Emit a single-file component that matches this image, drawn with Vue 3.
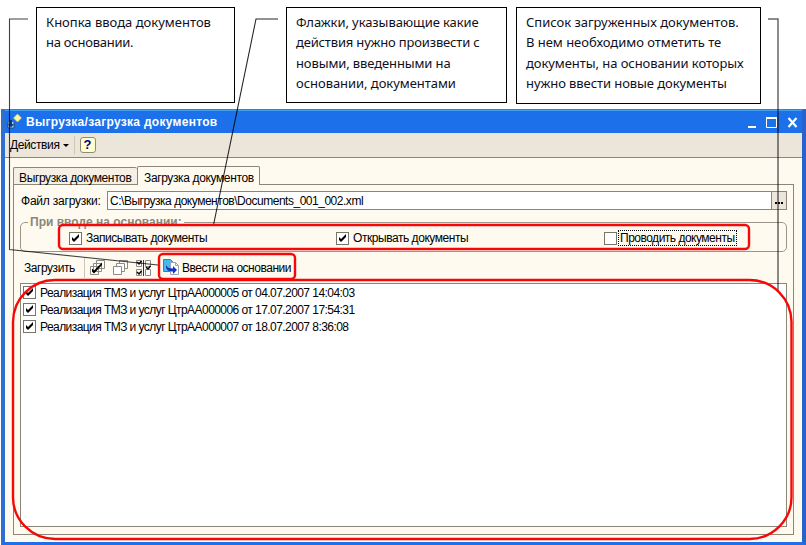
<script setup>
import { ref } from 'vue'

const notes = [
  { cls: 'n1', lines: [['Кнопка ввода документов', 0], ['на основании.', -0.25]] },
  {
    cls: 'n2',
    lines: [
      ['Флажки, указывающие какие', -0.08],
      ['действия нужно произвести с', -0.17],
      ['новыми, введенными на', -0.12],
      ['основании, документами', -0.05],
    ],
  },
  {
    cls: 'n3',
    lines: [
      ['Список загруженных документов.', -0.02],
      ['В нем необходимо отметить те', -0.03],
      ['документы, на основании которых', -0.07],
      ['нужно ввести новые документы', -0.08],
    ],
  },
]

const flags = ref([
  { label: 'Записывать документы', cls: 'f1', on: true },
  { label: 'Открывать документы', cls: 'f2', on: true },
  { label: 'Проводить документы', cls: 'f3', on: false },
])

const docs = ref([
  { label: 'Реализация ТМЗ и услуг ЦтрАА000005 от 04.07.2007 14:04:03', on: true },
  { label: 'Реализация ТМЗ и услуг ЦтрАА000006 от 17.07.2007 17:54:31', on: true },
  { label: 'Реализация ТМЗ и услуг ЦтрАА000007 от 18.07.2007 8:36:08', on: true },
])
</script>

<template>
  <div class="page">
    <div class="notes">
      <div v-for="n in notes" :key="n.cls" class="note" :class="n.cls">
        <div v-for="l in n.lines" :key="l[0]" :style="{ letterSpacing: l[1] + 'px' }">{{ l[0] }}</div>
      </div>
    </div>

    <div class="window">
      <div class="titlebar">
        <svg class="app-icon" width="16" height="18" viewBox="0 0 16 18">
          <path d="M1 9v6h6V9" fill="#b9d4e8" stroke="#1b4f7c" />
          <path d="M3 7h2v4h2l-3 3.500L1 11h2z" fill="#12347c" />
          <path d="M10.500 1l4 4-4 4-4-4z" fill="#fffaa0" stroke="#d6c75a" stroke-width=".6" />
        </svg>
        <span class="title">Выгрузка/загрузка документов</span>
        <svg class="controls" width="52" height="14" viewBox="0 0 52 14">
          <path d="M1 12h8" stroke="#fff" stroke-width="2" />
          <path d="M19.500 3.500h10v9h-10z" fill="none" stroke="#fff" />
          <path d="M19 3h11" stroke="#fff" stroke-width="2" />
          <path d="M41.500 3l8 9M49.500 3l-8 9" stroke="#fff" stroke-width="2.200" />
        </svg>
      </div>

      <div class="menubar">
        <span class="actions">Действия</span>
        <span class="caret"></span>
        <span class="vsep"></span>
        <span class="help">?</span>
      </div>

      <div class="body">
        <div class="tabs">
          <div class="tab t1">Выгрузка документов</div>
          <div class="tab t2 active">Загрузка документов</div>
        </div>
        <div class="panel">
          <div class="file">
            <span class="file-label">Файл загрузки:</span>
            <div class="input">C:\Выгрузка документов\Documents_001_002.xml</div>
            <div class="dots"><i></i><i></i><i></i></div>
          </div>

          <div class="group">
            <div class="legend">При вводе на основании:</div>
            <div v-for="f in flags" :key="f.cls" class="flag" :class="f.cls">
              <span class="check" @click="f.on = !f.on">
                <svg v-if="f.on" width="11" height="11" viewBox="0 0 11 11"><path d="M2 4v3l2 2 5-5V1L4 6z" fill="#000" /></svg>
              </span>
              <span class="flag-label">{{ f.label }}</span>
            </div>
          </div>

          <div class="tools">
            <span class="load">Загрузить</span>
            <span class="tsep"></span>
            <svg class="ico" width="16" height="16" viewBox="0 0 16 16">
              <g fill="#fff" stroke="#8d8b82">
                <path d="M6.500 .5h8v8h-8zM3.500 3.500h8v8h-8zM.5 6.500h8v8h-8z" />
              </g>
              <path d="M2 8.500v3l2 2 8-8.500V2.500L4 10.500z" fill="#000" />
            </svg>
            <svg class="ico" width="16" height="16" viewBox="0 0 16 16">
              <g fill="#fff" stroke="#8d8b82">
                <path d="M6.500 .5h8v8h-8z" />
                <path d="M3.500 3.500h8v8h-8z" />
                <path d="M.5 6.500h8v8h-8z" />
              </g>
            </svg>
            <svg class="ico" width="16" height="16" viewBox="0 0 16 16">
              <g fill="#fff" stroke="#8d8b82">
                <path d="M.5 .5h5v6h-5zM.5 9.500h5v6h-5zM9.500 .5h5v6h-5zM9.500 9.500h5v6h-5z" />
                <path d="M7.500 0v16" stroke="#333" />
              </g>
              <path d="M1 2l2 2 2.500-3M1 12l2 2 2.500-3M10 7l2 2 2.500-3" fill="none" stroke="#000" stroke-width="1.500" />
            </svg>
            <div class="enter">
              <svg width="17" height="17" viewBox="0 0 17 17">
                <path d="M.5 .5h7l2 2v10h-9z" fill="#43b9ee" stroke="#2586c0" />
                <path d="M7.500 3.500h5l3 3v9h-8z" fill="#fff" stroke="#9aa5b4" />
                <path d="M12.500 3.500v3h3" fill="none" stroke="#9aa5b4" />
                <path d="M3 6c1 2.500 3 3.500 7 3.500V7l4 4-4 4v-2.500C5.500 12.500 2.500 10.500 3 6z" fill="#1730c4" />
              </svg>
              <span>Ввести на основании</span>
            </div>
          </div>

          <div class="list">
            <div v-for="d in docs" :key="d.label" class="doc">
              <span class="check" @click="d.on = !d.on">
                <svg v-if="d.on" width="11" height="11" viewBox="0 0 11 11"><path d="M2 4v3l2 2 5-5V1L4 6z" fill="#000" /></svg>
              </span>
              <span>{{ d.label }}</span>
            </div>
          </div>
        </div>
      </div>
    </div>

    <svg class="overlay" width="806" height="545" viewBox="0 0 806 545">
      <g fill="none" stroke="#000" stroke-width="1.100">
        <path d="M28 19H9.500V249.500L158 265" stroke-opacity=".75" />
        <path d="M278 19H256L213.500 225" stroke-opacity=".85" />
        <path d="M768 19H778V292" stroke-opacity=".6" stroke-width="1.500" />
      </g>
      <g fill="none" stroke="#f60808" stroke-width="2.400">
        <rect x="59" y="225" width="690" height="24" rx="4" />
        <rect x="159" y="254" width="136" height="25" rx="4" />
        <rect x="13" y="280" width="778.500" height="259" rx="42" />
      </g>
    </svg>
  </div>
</template>

<style>
body {
  background: #fff;
  overflow: hidden;
}
</style>

<style scoped>
.page {
  position: relative;
  width: 806px;
  height: 545px;
  overflow: hidden;
  box-sizing: border-box;
  background: #fff;
  color: #000;
  font: 12px/14px "Liberation Sans", Arial, sans-serif;
  white-space: nowrap;
}
.page * {
  box-sizing: border-box;
}
svg {
  display: block;
  flex: none;
}
.notes {
  display: flex;
  height: 109px;
  padding: 7px 0 0 36px;
}
.note {
  height: 96px;
  border: 1px solid #000;
  padding: 4px 0 0 9px;
  font: 13px/20.3px "Noto Sans", "Open Sans", sans-serif;
  color: #10101c;
}
.n1 {
  width: 199px;
}
.n2 {
  width: 221px;
  margin-left: 51px;
}
.n3 {
  width: 245px;
  height: 97px;
  margin-left: 9px;
}
.window {
  height: 436px;
  margin-left: 1px;
  border-top: 1px solid #6d7480;
  border-left: 4px solid #2f6fd0;
  border-right: 4px solid #2a62cc;
  border-bottom: 3px solid #1e6fe8;
  background: #fefaf0;
}
.titlebar {
  display: flex;
  align-items: center;
  height: 23px;
  background: #1c70ea;
  border-top: 1px solid #3fa0f5;
  padding: 0 3px 0 2px;
}
.app-icon {
  margin-top: -1px;
}
.title {
  margin-left: 3px;
  color: #fff;
  font-weight: bold;
  letter-spacing: 0.29px;
}
.controls {
  margin-left: auto;
}
.menubar {
  display: flex;
  align-items: center;
  height: 25px;
  background: #ebe5da;
  border-bottom: 1px solid #8b8778;
  padding-left: 5px;
}
.actions {
  letter-spacing: -0.38px;
}
.caret {
  margin-left: 3px;
  border: 3px solid transparent;
  border-top-color: #000;
  border-bottom: 0;
}
.vsep {
  width: 1px;
  height: 18px;
  margin: 0 5px 0 5px;
  background: #cbc6b6;
}
.help {
  width: 16px;
  height: 16px;
  border: 1px solid #8f8c72;
  border-radius: 3px;
  background: #ffffd0;
  color: #000080;
  font: bold 13px/14px "Liberation Sans", sans-serif;
  text-align: center;
}
.body {
  padding: 8px 8px 0;
}
.tabs {
  display: flex;
  align-items: flex-end;
  height: 18px;
}
.tab {
  height: 17px;
  padding: 3px 0 0 5px;
  border: 1px solid #8b8778;
  border-bottom: 0;
  border-radius: 2px 2px 0 0;
  background: #f5efe5;
  letter-spacing: -0.37px;
}
.t1 {
  width: 124px;
  border-right: 0;
}
.t2 {
  width: 123px;
}
.tab.active {
  height: 19px;
  margin-bottom: -1px;
  padding: 4px 0 0 6px;
  background: #fefaf0;
  position: relative;
}
.panel {
  width: 781px;
  height: 351px;
  border: 1px solid #8b8778;
  padding: 6px 6px 0;
}
.file {
  display: flex;
  height: 19px;
}
.file-label {
  width: 87px;
  padding: 3px 0 0 1px;
  letter-spacing: -0.22px;
}
.input {
  flex: 1;
  border: 1px solid #8b8778;
  background: #fff;
  padding: 2px 0 0 2px;
  letter-spacing: -0.48px;
}
.dots {
  display: flex;
  align-items: flex-end;
  justify-content: center;
  gap: 1px;
  width: 15px;
  padding-bottom: 5px;
  border: 1px solid #8b8778;
  border-left: 0;
  background: #ebe5da;
}
.dots i {
  width: 2px;
  height: 2px;
  background: #000;
}
.group {
  display: grid;
  grid-template-columns: 267px 268px 1fr;
  align-items: center;
  height: 30px;
  margin-top: 12px;
  padding: 2px 0 0 48px;
  border: 1px solid #9a9688;
  border-radius: 5px;
  position: relative;
}
.legend {
  position: absolute;
  left: 7px;
  top: -8px;
  padding: 0 2px;
  background: #fefaf0;
  color: #8b8778;
  font-weight: bold;
}
.flag {
  display: flex;
  align-items: center;
}
.flag-label {
  margin-left: 3px;
  padding: 0 1px;
  letter-spacing: -0.45px;
}
.f3 .flag-label {
  margin-left: 2px;
  letter-spacing: -0.5px;
  outline: 1px dotted #000;
}
.check {
  flex: none;
  width: 13px;
  height: 13px;
  border: 1px solid #77756b;
  background: #fff;
}
.tools {
  display: flex;
  align-items: center;
  height: 31px;
  padding: 0 0 0 4px;
}
.load {
  width: 60px;
  letter-spacing: -0.45px;
}
.tsep {
  width: 1px;
  height: 20px;
  margin-right: 5px;
  background: #cbc6b6;
}
.ico {
  margin-right: 7px;
}
.enter {
  display: flex;
  align-items: center;
  gap: 2px;
  margin-left: 4px;
  letter-spacing: -0.47px;
}
.list {
  height: 244px;
  border: 1px solid #8b8778;
  background: #fff;
  padding: 0 0 0 2px;
}
.doc {
  display: flex;
  align-items: center;
  gap: 4px;
  height: 17px;
  letter-spacing: -0.56px;
}
.overlay {
  position: absolute;
  left: 0;
  top: 0;
  pointer-events: none;
}
</style>
